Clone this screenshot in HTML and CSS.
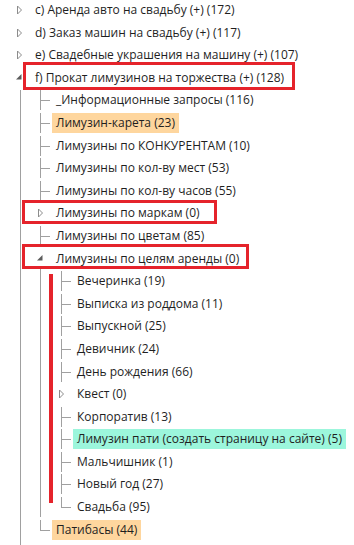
FILE: index.html
```html
<!DOCTYPE html>
<html>
<head>
  <title>Прокат лимузинов</title>
  <link rel="stylesheet" href="styles.css">
</head>
<body>

  <svg class="defs" width="0" height="0">
    <symbol id="closed" viewBox="0 0 21 20">
      <rect width="21" height="20" fill="#fff"/>
      <polygon points="7.5,6 11.5,10 7.5,14" fill="#fff" stroke="#8c8c8c" stroke-width="1"/>
    </symbol>
    <symbol id="open" viewBox="0 0 21 20">
      <rect width="21" height="20" fill="#fff"/>
      <polygon points="11.5,6 11.5,11.5 6,11.5" fill="#5c5c5c"/>
    </symbol>
  </svg>

  <ul class="tree">
    <li>
      <div class="row"><svg class="tog"><use href="#closed"/></svg><span class="label">c) Аренда авто на свадьбу (+) (172)</span></div>
    </li>
    <li>
      <div class="row"><svg class="tog"><use href="#closed"/></svg><span class="label">d) Заказ машин на свадьбу (+) (117)</span></div>
    </li>
    <li>
      <div class="row"><svg class="tog"><use href="#closed"/></svg><span class="label">e) Свадебные украшения на машину (+) (107)</span></div>
    </li>
    <li>
      <div class="row"><svg class="tog"><use href="#open"/></svg><span class="label boxed box-f">f) Прокат лимузинов на торжества (+) (128)</span></div>
      <ul class="kids guide">
        <li><div class="row"><span class="tog"></span><span class="label">_Информационные запросы (116)</span></div></li>
        <li><div class="row"><span class="tog"></span><span class="label orange">Лимузин-карета (23)</span></div></li>
        <li><div class="row"><span class="tog"></span><span class="label">Лимузины по КОНКУРЕНТАМ (10)</span></div></li>
        <li><div class="row"><span class="tog"></span><span class="label">Лимузины по кол-ву мест (53)</span></div></li>
        <li><div class="row"><span class="tog"></span><span class="label">Лимузины по кол-ву часов (55)</span></div></li>
        <li><div class="row"><svg class="tog"><use href="#closed"/></svg><span class="label boxed box-marki">Лимузины по маркам (0)</span></div></li>
        <li><div class="row"><span class="tog"></span><span class="label">Лимузины по цветам (85)</span></div></li>
        <li>
          <div class="row"><svg class="tog"><use href="#open"/></svg><span class="label boxed box-celi">Лимузины по целям аренды (0)</span></div>
          <ul class="kids marked">
            <li><div class="row"><span class="tog"></span><span class="label">Вечеринка (19)</span></div></li>
            <li><div class="row"><span class="tog"></span><span class="label">Выписка из роддома (11)</span></div></li>
            <li><div class="row"><span class="tog"></span><span class="label">Выпускной (25)</span></div></li>
            <li><div class="row"><span class="tog"></span><span class="label">Девичник (24)</span></div></li>
            <li><div class="row"><span class="tog"></span><span class="label">День рождения (66)</span></div></li>
            <li><div class="row"><svg class="tog"><use href="#closed"/></svg><span class="label">Квест (0)</span></div></li>
            <li><div class="row"><span class="tog"></span><span class="label">Корпоратив (13)</span></div></li>
            <li><div class="row"><span class="tog"></span><span class="label teal">Лимузин пати (создать страницу на сайте) (5)</span></div></li>
            <li><div class="row"><span class="tog"></span><span class="label">Мальчишник (1)</span></div></li>
            <li><div class="row"><span class="tog"></span><span class="label">Новый год (27)</span></div></li>
            <li><div class="row"><span class="tog"></span><span class="label">Свадьба (95)</span></div></li>
          </ul>
        </li>
        <li><div class="row"><span class="tog"></span><span class="label orange">Патибасы (44)</span></div></li>
      </ul>
    </li>
  </ul>

</body>
</html>
```

FILE: styles.css
```css
body {
  margin: 0;
  background: #fff;
  color: #1f1f1f;
  font-family: "Open Sans", sans-serif;
  font-size: 12px;
}

.defs {
  position: absolute;
}

ul {
  list-style: none;
  margin: 0;
  padding: 0;
}

.tree {
  padding-left: 10px;
}

.kids {
  padding-left: 21px;
}

/* линии дерева */
.kids > li {
  background: linear-gradient(#a0a0a0, #a0a0a0) no-repeat 9px 0 / 1px 100%;
}

.kids > li:last-child {
  background-size: 1px 11px;
}

.kids > li > .row {
  background: linear-gradient(#a0a0a0, #a0a0a0) no-repeat 9px 10px / 10px 1px;
}

.guide {
  padding-bottom: 4px;
  background: linear-gradient(#a0a0a0, #a0a0a0) no-repeat 10px 0 / 1px 100%;
}

.row {
  display: flex;
  height: 20px;
  margin-bottom: 2.6px;
}

.tog {
  flex: none;
  width: 21px;
  height: 20px;
}

.label {
  position: relative;
  padding: 0 4px;
  line-height: 20px;
  white-space: nowrap;
}

.orange {
  background: #fed69e;
}

.teal {
  background: #9cf6dc;
}

/* красные пометки */
.boxed::after {
  content: "";
  position: absolute;
  border: 3px solid #e5232b;
}

.box-f::after {
  top: -5.5px;
  bottom: -2.5px;
  left: -8px;
  right: -7px;
}

.box-marki::after {
  top: -3.4px;
  bottom: -0.6px;
  left: -30px;
  right: -13px;
}

.box-celi::after {
  top: -4.6px;
  bottom: -0.4px;
  left: -30px;
  right: -6px;
}

.marked {
  position: relative;
}

.marked::before {
  content: "";
  position: absolute;
  left: 18px;
  top: 3px;
  bottom: 14px;
  width: 4px;
  background: #e5232b;
}
```
